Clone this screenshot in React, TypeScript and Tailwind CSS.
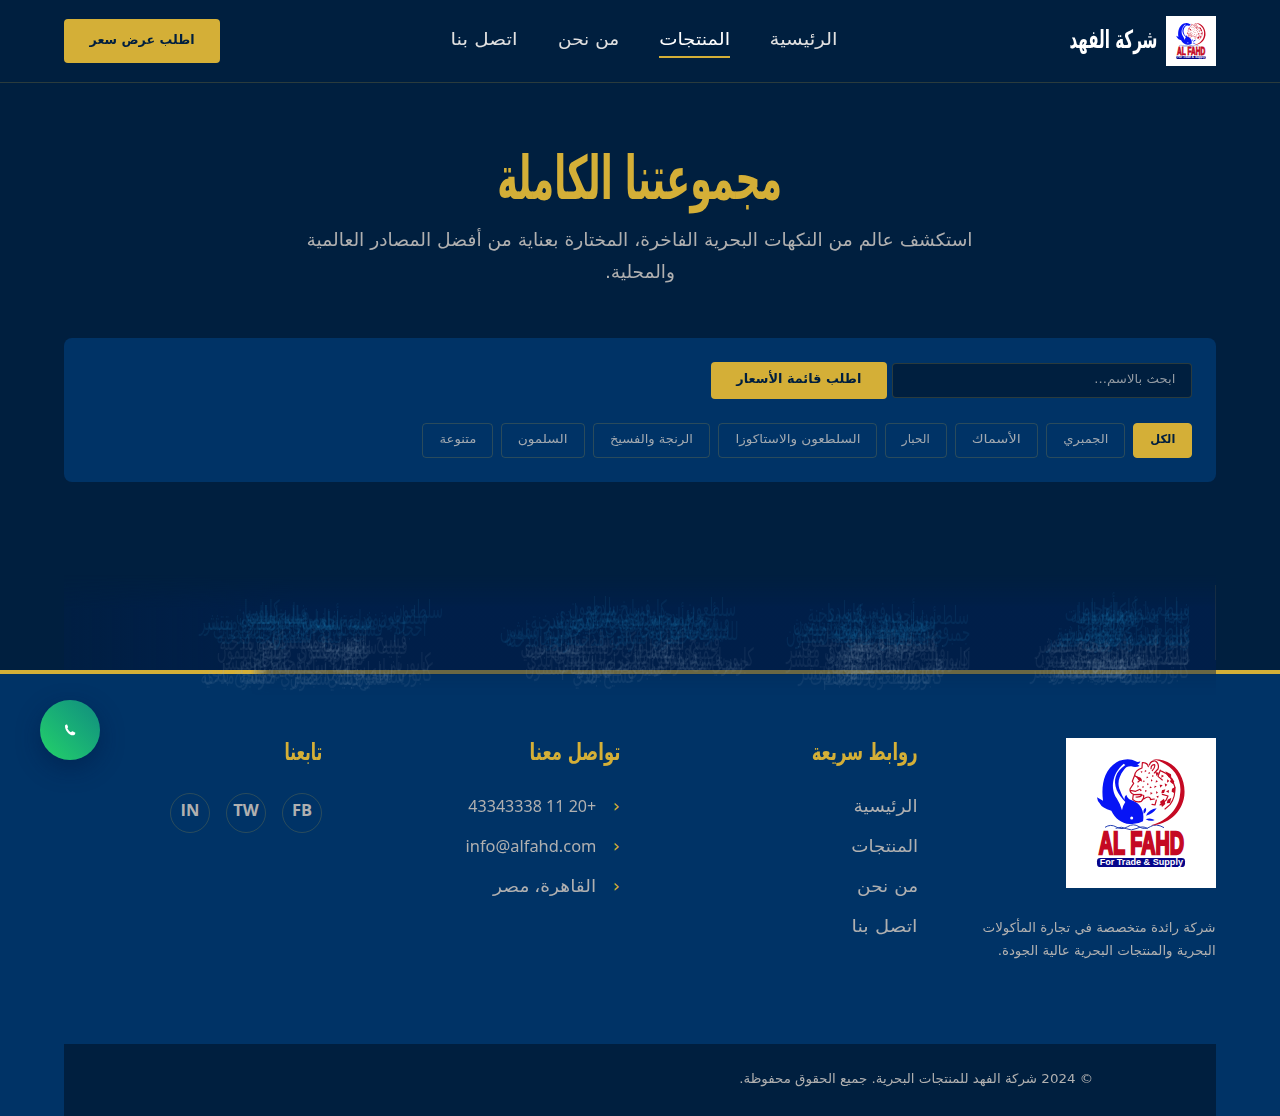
import { useLayoutEffect, useRef, type ReactNode } from "react";

/* Single line of text, condensed or widened horizontally to its column width. */
function Fit({ className, children }: { className: string; children: ReactNode }) {
  const box = useRef<HTMLSpanElement>(null);
  const line = useRef<HTMLSpanElement>(null);
  useLayoutEffect(() => {
    if (box.current && line.current) {
      line.current.style.transform = `scaleX(${box.current.clientWidth / line.current.getBoundingClientRect().width})`;
    }
  }, []);
  return (
    <span ref={box} className={`flex shrink-0 justify-start ${className}`}>
      <span ref={line} className="shrink-0 origin-right whitespace-nowrap">{children}</span>
    </span>
  );
}

function Logo({ className }: { className: string }) {
  return (
    <svg viewBox="48 24 450 450" direction="ltr" className={className}>
      <rect x="48" y="24" width="450" height="450" fill="#fff" />
      <path
        fill="#0714f5"
        d="M208 92Q238 82 257 94Q263 98 271 94Q270 101 262 103L269 108Q257 113 244 109Q229 108 222 119C204 142 202 163 210 181C214 192 219 202 224 210Q222 200 229 194Q232 206 243 210C268 217 285 239 279 274Q262 284 239 282C214 280 195 265 184 242Q156 235 149 220Q142 213 141 202Q150 207 159 212C153 165 161 116 208 92Z"
      />
      <path d="M221 101C185 132 181 175 200 205Q212 224 216 241Q219 225 226 216Q207 196 200 180C189 150 196 126 226 105Z" fill="#fff" />
      <path d="M281 251Q278 238 287 233Q292 243 281 251Z M288 257Q298 237 320 235Q309 252 288 257Z M287 268Q300 262 314 270Q302 276 287 268Z" fill="#0714f5" />
      <circle cx="245" cy="264" r="4.5" fill="#fff" />
      <path d="M165 292Q182 281 199 291T233 290T267 290T301 290T342 293M197 295Q215 288 229 296T261 295T293 296" fill="none" stroke="#2440b5" strokeWidth="3" />
      <path d="M308 88C373 84 409 141 403 197C396 250 352 284 302 286C355 272 387 232 390 194C399 142 362 98 308 88Z" fill="#c50923" />
      <g fill="none" stroke="#c50923" strokeWidth="3.5" strokeLinecap="round" strokeLinejoin="round">
        <path d="M254 136Q256 120 276 114L277 98Q292 97 295 110M298 105Q303 91 316 93Q329 101 324 117L313 129M303 116Q303 104 314 104Q316 112 307 122" />
        <path d="M254 136L247 154L251 160L240 177Q239 188 250 193L248 208Q258 219 274 214Q283 205 281 196M254 137L273 148L264 156M241 181L257 184L270 178M250 194L274 193M258 201Q270 202 277 195M281 207Q297 195 302 207" />
        <path d="M330 121Q366 135 374 169Q378 199 360 224L345 237M331 121L324 139L337 150M301 209L313 207M306 223L315 225L319 210M330 225L348 211L354 198L337 193" />
      </g>
      <g fill="#c50923">
        <path d="M346 124l17 9 1 13-9-5zM365 142l8 13-5 7-8-7zM366 176l11-6-3 20-9-5zM330 215l12-9 4 16-10 9zM353 209l11-6-4 16-10 1zM256 137l16 6 5 12-12-5zM316 126l11 2-7 11zM336 181l10-3-4 11-8 1z" />
        <path d="M272 123l6 2-4 4zM285 120l5 3-6 4zM297 125l4 5-6 2zM307 135l5 3-6 3zM291 139l4 4-6 2zM281 151l4 3-6 3zM303 148l5 3-5 4zM318 151l6 3-7 4zM291 160l6 2-5 4zM278 168l5 3-6 3zM300 169l6 4-7 2zM314 167l6 2-7 6zM329 164l9 1-7 8zM344 160l8 4-6 6zM285 180l6 2-5 5zM301 187l7 2-6 5zM319 183l5 5-6 3zM319 199l7-2-2 8zM348 184l9-4-1 9zM352 148l6 5-7 5zM335 134l7 4-8 5zM271 177l5 4-6 3zM262 166l5 2-4 5z" />
      </g>
      <text x="146" y="373" textLength="256" lengthAdjust="spacingAndGlyphs" fontFamily="Liberation Sans" fontWeight="700" fontSize="96" fill="#c50923" stroke="#c50923" strokeWidth="7">AL FAHD</text>
      <rect x="141" y="384" width="264" height="27" rx="10" fill="#05058a" />
      <text x="149" y="405" textLength="250" lengthAdjust="spacingAndGlyphs" fontFamily="Liberation Sans" fontWeight="700" fontSize="25" fill="#fff">For Trade &amp; Supply</text>
    </svg>
  );
}

const nav = [
  { t: "الرئيسية", w: "w-[68px]" },
  { t: "المنتجات", w: "w-[71px]", on: true },
  { t: "من نحن", w: "w-[61px]" },
  { t: "اتصل بنا", w: "w-[67px]" },
];

const chips = [
  { t: "الكل", w: "w-[25px]", on: true },
  { t: "الجمبري", w: "w-[45px]" },
  { t: "الأسماك", w: "w-[49px]" },
  { t: "الحبار", w: "w-[28px]" },
  { t: "السلطعون والاستاكوزا", w: "w-[125px]" },
  { t: "الرنجة والفسيخ", w: "w-[83px]" },
  { t: "السلمون", w: "w-[50px]" },
  { t: "متنوعة", w: "w-[37px]" },
];

const links = [
  { t: "الرئيسية", w: "w-[64px]" },
  { t: "المنتجات", w: "w-[67px]" },
  { t: "من نحن", w: "w-[61px]" },
  { t: "اتصل بنا", w: "w-[66px]" },
];

const contacts = [
  { t: "+20 11 43343338", w: "w-[128px]" },
  { t: "info@alfahd.com", w: "w-[131px]" },
  { t: "القاهرة، مصر", w: "w-[103px]" },
];

const names = ["جمبري مقشر", "سلطعون", "فيليه سلمون", "كابوريا", "رنجة مدخنة", "للسلطات", "فسيخ بلدي", "أحجام"];

const noise = (n: number) => {
  const v = Math.sin(n * 12.9898) * 43758.5453;
  return v - Math.floor(v);
};

/* Product names of the cards fading in over each other, in four columns. */
const columns = [
  { right: 26, spread: 85, dip: 0 },
  { right: 242, spread: 125, dip: 3 },
  { right: 460, spread: 190, dip: 0 },
  { right: 765, spread: 190, dip: 3 },
];
const ghosts = Array.from({ length: 220 }, (_, i) => {
  const c = columns[i % 4];
  const top = 20 + c.dip + noise(i + 1) * 68;
  const shift = noise(i + 301);
  return {
    t: names[Math.floor(noise(i + 601) * names.length)],
    right: c.right + (i % 4 === 0 && shift < 0.35 ? 0 : shift * c.spread),
    top,
    low: top > 52,
  };
});

export default function App() {
  return (
    <div dir="rtl" className="flex h-[1116px] flex-col overflow-hidden bg-[#001f3f] font-['DejaVu_Sans',sans-serif] text-[#b0b0b0]">
      <header className="flex h-[83px] shrink-0 items-center justify-between border-b border-[#d4af37]/20 px-16">
        <div className="flex items-center gap-[9px]">
          <Logo className="size-[50px]" />
          <Fit className="w-[88px] pb-0.5 text-[25px] leading-[44px] font-bold text-white">شركة الفهد</Fit>
        </div>
        <nav className="flex gap-10 pb-px">
          {nav.map((n) => (
            <a key={n.t} className={n.on ? "h-[35px] border-b-2 border-[#d4af37] text-white" : "h-[35px] text-[#e0e0e0]"}>
              <Fit className={`text-[17px] leading-8 ${n.w}`}>{n.t}</Fit>
            </a>
          ))}
        </nav>
        <button className="flex h-11 w-[156px] justify-center rounded bg-[#d4af37] pt-[9px] text-[#001f3f]">
          <Fit className="w-[105px] text-[13px] leading-6 font-bold">اطلب عرض سعر</Fit>
        </button>
      </header>

      <main className="relative h-[587px] shrink-0 px-16">
        <div className="flex flex-col items-center pt-[55px]">
          <h1 className="text-[#d4af37]">
            <Fit className="w-[285px] text-[60px] leading-[80px] font-bold">مجموعتنا الكاملة</Fit>
          </h1>
          <p className="flex flex-col items-center pt-[6px] text-[18px] leading-8">
            <Fit className="w-[666px]">استكشف عالم من النكهات البحرية الفاخرة، المختارة بعناية من أفضل المصادر العالمية</Fit>
            <Fit className="w-[70px]">والمحلية.</Fit>
          </p>
        </div>

        <section className="mt-[50px] flex h-36 flex-col gap-6 rounded-lg bg-[#003366] p-6">
          <div className="flex h-[37px] items-center gap-[5px]">
            <div className="flex h-[35px] w-[300px] rounded border border-[#d4af37]/20 bg-[#001f3f] px-4 pt-[5px]">
              <Fit className="w-[81px] text-[12px] leading-5 text-[#929aa2]">ابحث بالاسم...</Fit>
            </div>
            <button className="flex h-[37px] w-[176px] justify-center rounded bg-[#d4af37] pt-[5px] text-[#001f3f]">
              <Fit className="w-[125px] text-[13px] leading-6 font-bold">اطلب قائمة الأسعار</Fit>
            </button>
          </div>
          <div className="flex gap-2">
            {chips.map((c) => (
              <button key={c.t} className={c.on ? "h-[35px] rounded border border-[#d4af37] bg-[#d4af37] px-4 font-bold text-[#001f3f]" : "h-[35px] rounded border border-[#d4af37]/20 px-4 text-[#a2a9b0]"}>
                <Fit className={`pb-1 text-[12px] leading-6 ${c.w}`}>{c.t}</Fit>
              </button>
            ))}
          </div>
        </section>

        <div aria-hidden="true" className="absolute top-[492px] right-16 z-10 h-[125px] w-[1152px]">
          <div className="absolute top-0 right-0 h-[95px] w-full bg-linear-to-l from-[#001f50]/60 from-80% to-[#001f50]/25 [mask-image:linear-gradient(to_bottom,transparent,black_35%)]" />
          <div className="absolute top-[95px] right-0 h-[25px] w-[965px] bg-[#001f50]/50 [mask-image:linear-gradient(to_bottom,black_15%,rgb(0_0_0/0.35)_20%,transparent),linear-gradient(to_left,black_98%,transparent)] [mask-composite:intersect]" />
          <div className="absolute top-[10px] right-0 h-[75px] w-px bg-[#d4af37]/10" />
          {ghosts.map((g, i) => (
            <span
              key={i}
              className={g.low ? "absolute text-[18px] leading-6 whitespace-nowrap text-[#a0acc8]/9" : "absolute text-[18px] leading-6 whitespace-nowrap text-[#1e78b4]/13"}
              style={{ right: g.right, top: g.top }}
            >
              <span className="inline-block origin-right scale-x-75 scale-y-140">{g.t}</span>
            </span>
          ))}
        </div>
      </main>

      <footer className="flex grow flex-col border-t-4 border-[#d4af37] bg-[#003366] px-16 pt-16">
        <div className="grid h-[306px] grid-cols-4 gap-10">
          <div>
            <Logo className="size-[150px]" />
            <p className="mt-7 text-[13px] leading-[23px]">
              <Fit className="w-[233px]">شركة رائدة متخصصة في تجارة المأكولات</Fit>
              <Fit className="w-[218px]">البحرية والمنتجات البحرية عالية الجودة.</Fit>
            </p>
          </div>
          <div>
            <h3 className="text-[#d4af37]"><Fit className="w-[106px] text-[24px] leading-7 font-bold">روابط سريعة</Fit></h3>
            <div className="mt-6 flex flex-col gap-2">
              {links.map((l) => <Fit key={l.t} className={`text-[17px] leading-8 ${l.w}`}>{l.t}</Fit>)}
            </div>
          </div>
          <div>
            <h3 className="text-[#d4af37]"><Fit className="w-[91px] text-[24px] leading-7 font-bold">تواصل معنا</Fit></h3>
            <div className="mt-6 flex flex-col gap-2">
              {contacts.map((c) => (
                <div key={c.t} className="flex leading-8">
                  <span className="w-6 text-[18px] text-[#d4af37]">‹</span>
                  <Fit className={`font-['Noto_Sans','DejaVu_Sans'] text-[17px] ${c.w}`}>{c.t}</Fit>
                </div>
              ))}
            </div>
          </div>
          <div>
            <h3 className="text-[#d4af37]"><Fit className="w-[38px] text-[24px] leading-7 font-bold">تابعنا</Fit></h3>
            <div className="mt-[27px] flex gap-4 font-['Open_Sans']">
              {["FB", "TW", "IN"].map((s) => (
                <a key={s} className="flex size-10 items-center justify-center rounded-full border border-[#d4af37]/20 pb-[5px] text-[16.5px] font-bold">{s}</a>
              ))}
            </div>
          </div>
        </div>
        <div className="h-[72px] bg-[#001f3f] pt-[23px] pr-[123px]">
          <Fit className="w-[354px] text-[13px] leading-6">© 2024 شركة الفهد للمنتجات البحرية. جميع الحقوق محفوظة.</Fit>
        </div>
      </footer>

      <a className="fixed bottom-[356px] left-10 z-20 flex size-[60px] items-center justify-center rounded-full bg-linear-to-tr from-[#25d366] to-[#128c7e] shadow-[0_8px_24px_rgba(0,20,60,0.4)]">
        <svg viewBox="0 0 12 12" className="size-3 fill-white">
          <path d="M1.1 1.2Q2.1.2 3.1.6L4.1 3Q3.9 3.8 3.3 4.2Q4.6 7 6.8 8.2L8.2 7.2Q9 7 11.4 8.7Q11.3 10.7 9.6 11.3C5.8 12 .2 6.1 1.1 1.2Z" />
        </svg>
      </a>
    </div>
  );
}
